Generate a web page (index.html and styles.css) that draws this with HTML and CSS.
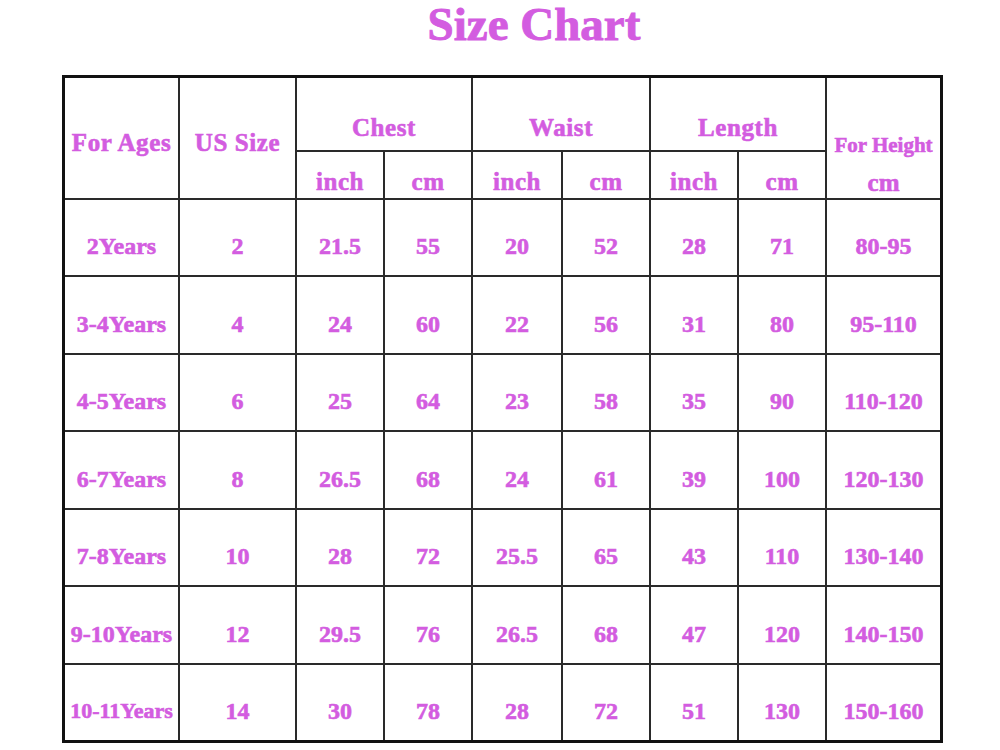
FILE: index.html
```html
<!DOCTYPE html>
<html>
<head>
<meta charset="utf-8">
<title>Size Chart</title>
<link rel="stylesheet" href="styles.css">
</head>
<body>
<div class="page">
  <h1 class="title">Size Chart</h1>
  <div class="chart">
    <div class="c hd span-rows">For Ages</div>
    <div class="c hd span-rows">US Size</div>
    <div class="c hd group">Chest</div>
    <div class="c hd group">Waist</div>
    <div class="c hd group">Length</div>
    <div class="c hd height"><span class="small">For Height</span><span>cm</span></div>
    <div class="c hd unit">inch</div>
    <div class="c hd unit">cm</div>
    <div class="c hd unit">inch</div>
    <div class="c hd unit">cm</div>
    <div class="c hd unit">inch</div>
    <div class="c hd unit">cm</div>

    <div class="c">2Years</div><div class="c">2</div><div class="c">21.5</div><div class="c">55</div><div class="c">20</div><div class="c">52</div><div class="c">28</div><div class="c">71</div><div class="c">80-95</div>
    <div class="c">3-4Years</div><div class="c">4</div><div class="c">24</div><div class="c">60</div><div class="c">22</div><div class="c">56</div><div class="c">31</div><div class="c">80</div><div class="c">95-110</div>
    <div class="c">4-5Years</div><div class="c">6</div><div class="c">25</div><div class="c">64</div><div class="c">23</div><div class="c">58</div><div class="c">35</div><div class="c">90</div><div class="c">110-120</div>
    <div class="c">6-7Years</div><div class="c">8</div><div class="c">26.5</div><div class="c">68</div><div class="c">24</div><div class="c">61</div><div class="c">39</div><div class="c">100</div><div class="c">120-130</div>
    <div class="c">7-8Years</div><div class="c">10</div><div class="c">28</div><div class="c">72</div><div class="c">25.5</div><div class="c">65</div><div class="c">43</div><div class="c">110</div><div class="c">130-140</div>
    <div class="c">9-10Years</div><div class="c">12</div><div class="c">29.5</div><div class="c">76</div><div class="c">26.5</div><div class="c">68</div><div class="c">47</div><div class="c">120</div><div class="c">140-150</div>
    <div class="c tight">10-11Years</div><div class="c">14</div><div class="c">30</div><div class="c">78</div><div class="c">28</div><div class="c">72</div><div class="c">51</div><div class="c">130</div><div class="c">150-160</div>
  </div>
</div>
</body>
</html>
```
FILE: styles.css
```css
html, body {
  margin: 0;
  padding: 0;
  background: #ffffff;
}

.page {
  width: 881px;
  padding-left: 62px;
  font-family: "Liberation Serif", "Times New Roman", serif;
  font-weight: bold;
  color: #d35ce0;
}

.title {
  margin: 0 0 27px 0;
  padding-left: 63px;
  text-align: center;
  font-size: 47px;
  line-height: 48px;
  font-weight: bold;
  -webkit-text-stroke: 0.9px #d35ce0;
}

.chart {
  display: grid;
  grid-template-columns: 113px 115px 86px 86px 88px 86px 86px 86px 113px;
  grid-template-rows: 72px 46px 75px 76px 75px 76px 75px 76px 75px;
  gap: 2px;
  background: #2a2a2a;
  border: 3px solid #111111;
  width: 875px;
}

.c {
  background: #ffffff;
  display: flex;
  align-items: center;
  justify-content: center;
  font-size: 24px;
  line-height: 24px;
  padding-top: 17px;
  white-space: nowrap;
  -webkit-text-stroke: 0.6px #d35ce0;
}

.hd {
  font-size: 25px;
  line-height: 25px;
  letter-spacing: 0.6px;
}

.span-rows {
  grid-row: span 2;
  padding-top: 9px;
}

.group {
  grid-column: span 2;
  padding-top: 26px;
}

.unit {
  padding-top: 13px;
}

.height {
  grid-column: 9;
  grid-row: 1 / span 2;
  flex-direction: column;
  justify-content: flex-start;
  padding-top: 55px;
  letter-spacing: 0;
}

.height .small {
  font-size: 21px;
  line-height: 24px;
  margin-bottom: 13px;
}

.tight {
  font-size: 22px;
}
```
